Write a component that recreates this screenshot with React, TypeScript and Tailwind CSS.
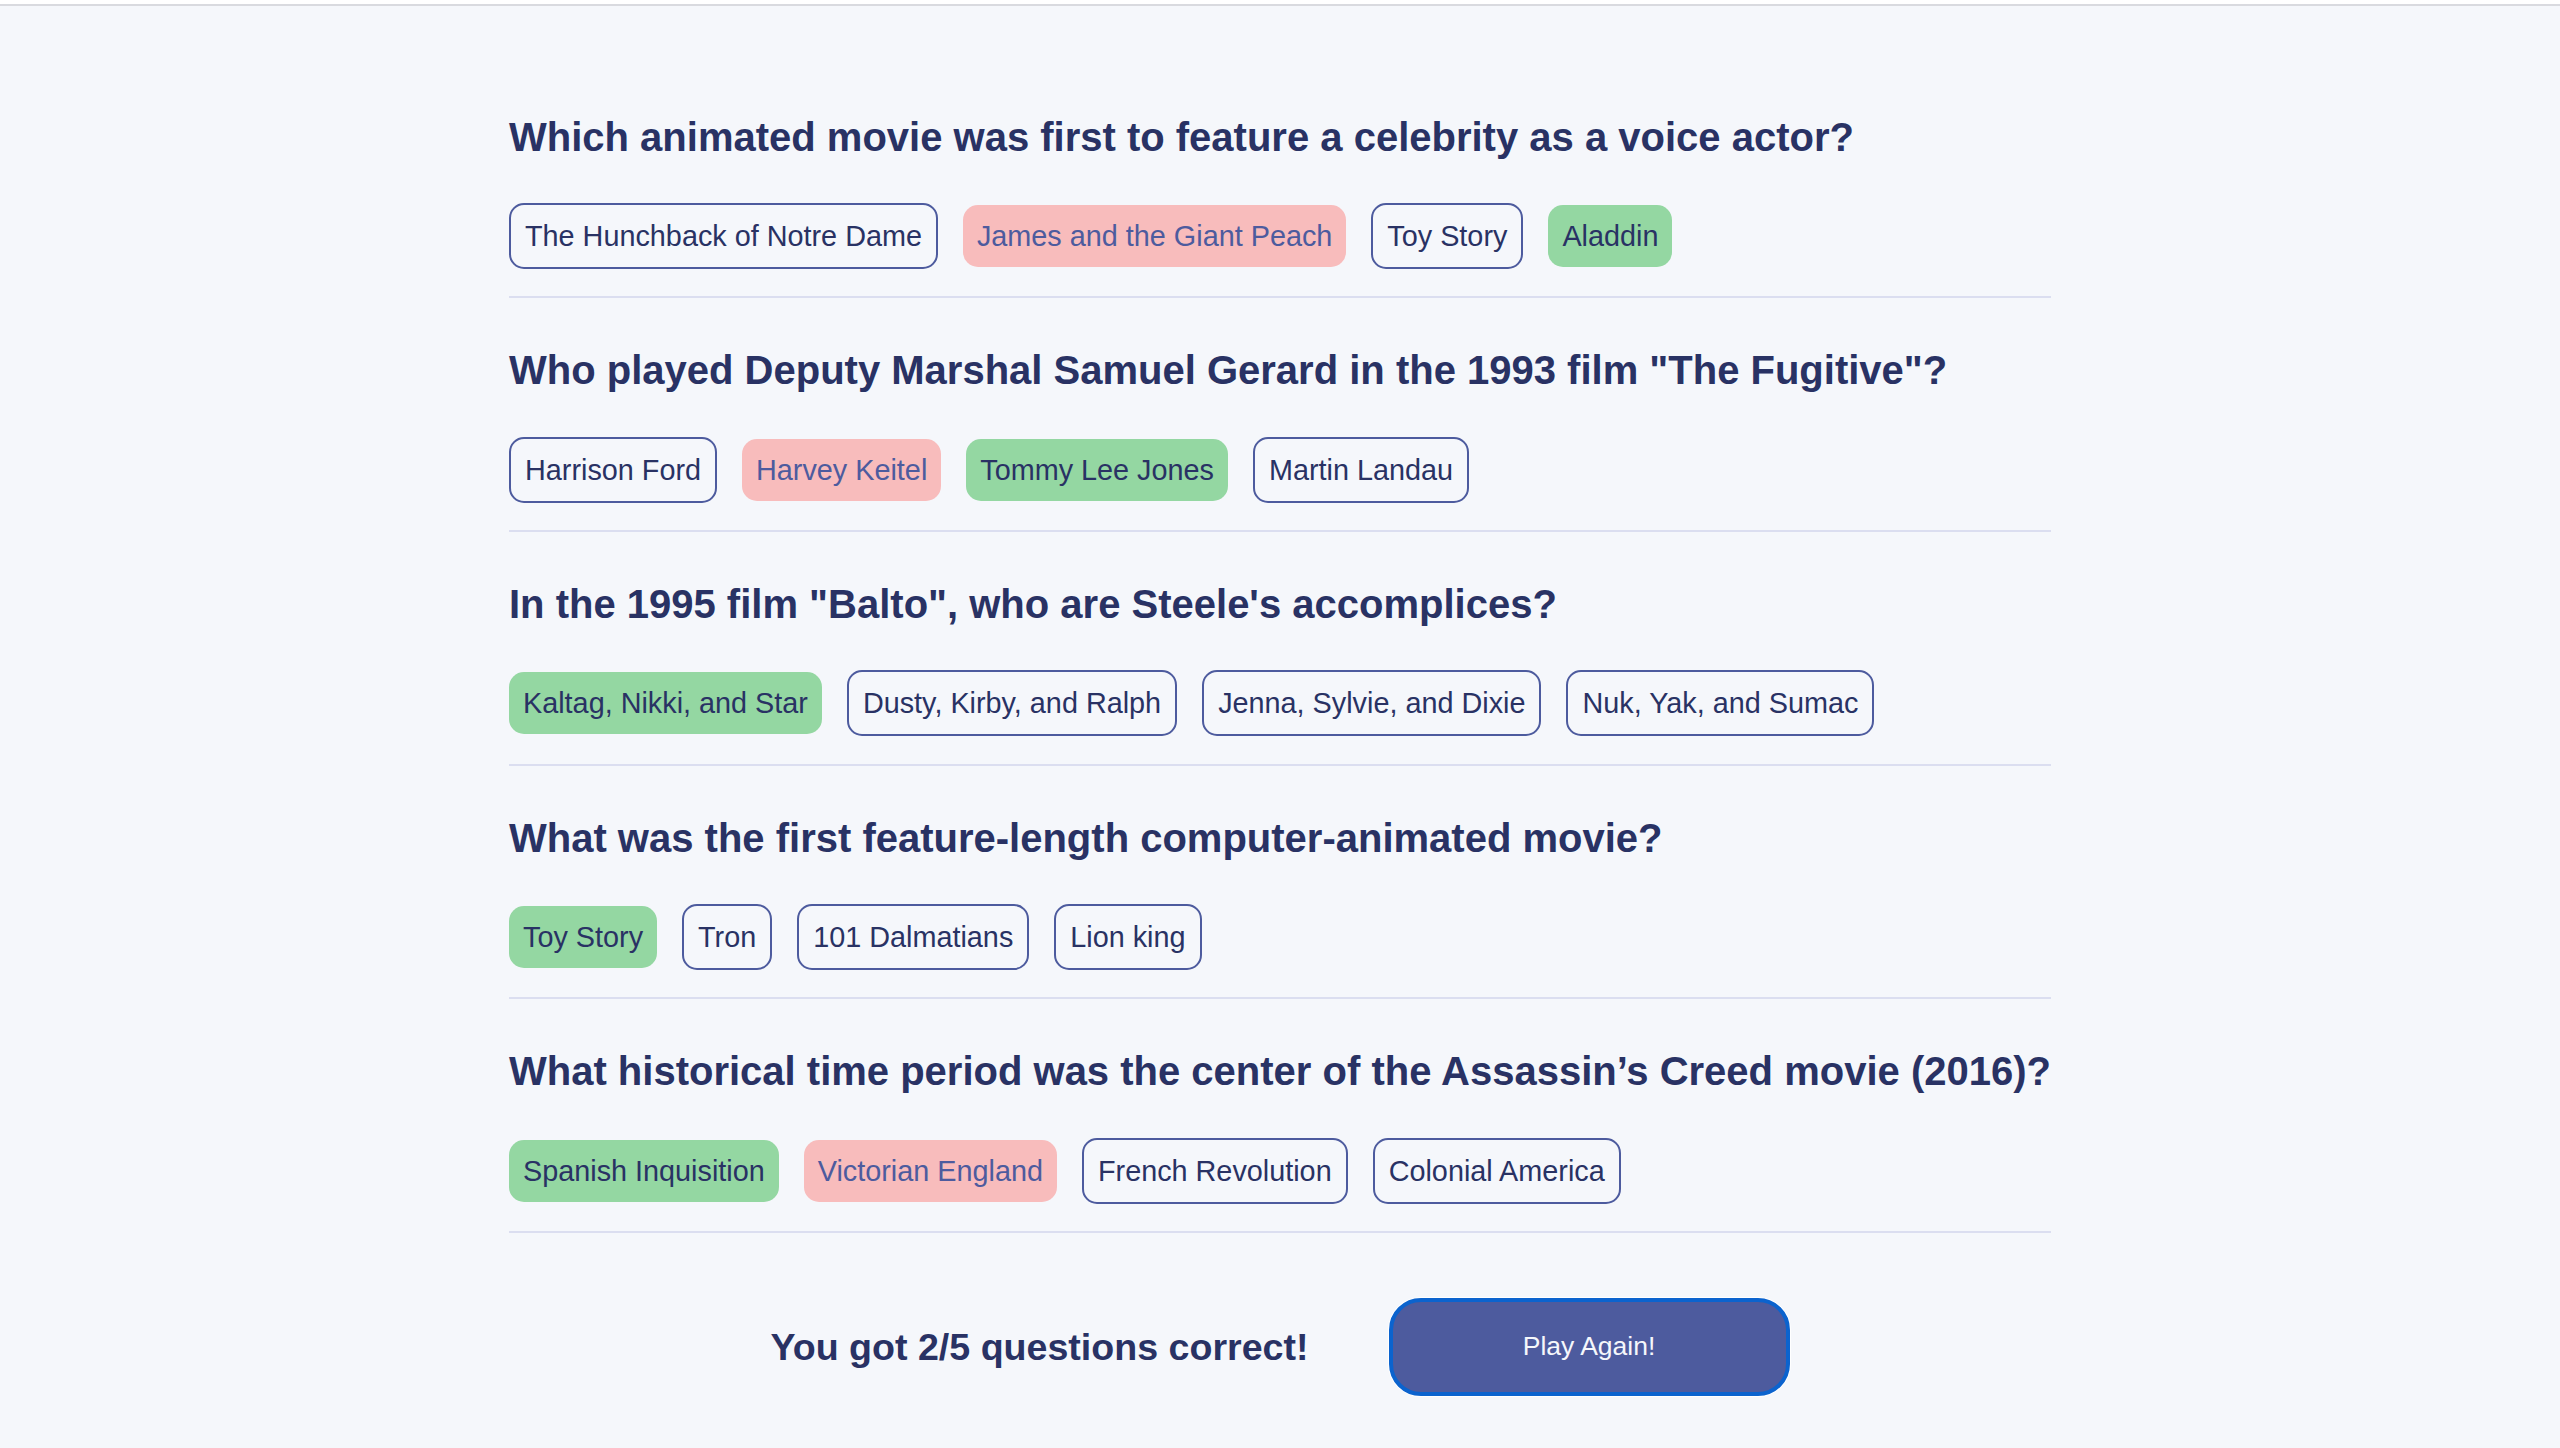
type Answer = {
  text: string;
  state: "none" | "correct" | "wrong";
};

type Question = {
  id: number;
  question: string;
  answers: Answer[];
};

const questions: Question[] = [
  {
    id: 1,
    question: "Which animated movie was first to feature a celebrity as a voice actor?",
    answers: [
      { text: "The Hunchback of Notre Dame", state: "none" },
      { text: "James and the Giant Peach", state: "wrong" },
      { text: "Toy Story", state: "none" },
      { text: "Aladdin", state: "correct" },
    ],
  },
  {
    id: 2,
    question: 'Who played Deputy Marshal Samuel Gerard in the 1993 film "The Fugitive"?',
    answers: [
      { text: "Harrison Ford", state: "none" },
      { text: "Harvey Keitel", state: "wrong" },
      { text: "Tommy Lee Jones", state: "correct" },
      { text: "Martin Landau", state: "none" },
    ],
  },
  {
    id: 3,
    question: 'In the 1995 film "Balto", who are Steele\'s accomplices?',
    answers: [
      { text: "Kaltag, Nikki, and Star", state: "correct" },
      { text: "Dusty, Kirby, and Ralph", state: "none" },
      { text: "Jenna, Sylvie, and Dixie", state: "none" },
      { text: "Nuk, Yak, and Sumac", state: "none" },
    ],
  },
  {
    id: 4,
    question: "What was the first feature-length computer-animated movie?",
    answers: [
      { text: "Toy Story", state: "correct" },
      { text: "Tron", state: "none" },
      { text: "101 Dalmatians", state: "none" },
      { text: "Lion king", state: "none" },
    ],
  },
  {
    id: 5,
    question: "What historical time period was the center of the Assassin’s Creed movie (2016)?",
    answers: [
      { text: "Spanish Inquisition", state: "correct" },
      { text: "Victorian England", state: "wrong" },
      { text: "French Revolution", state: "none" },
      { text: "Colonial America", state: "none" },
    ],
  },
];

function chipClass(state: Answer["state"]) {
  if (state === "correct") return "bg-[#94d7a2] text-[#293264]";
  if (state === "wrong") return "bg-[#f8bcbc] text-[#4d5b9e]";
  return "border-2 border-[#4d5b9e] text-[#293264]";
}

export default function App() {
  return (
    <div className="min-h-screen bg-[#f5f7fb] font-['Liberation_Sans',Arial,sans-serif]">
      <div className="h-[6px] bg-white border-b-2 border-[#d9dadf]" />

      <main className="w-[1542px] mx-auto pt-[58.5px] pb-[50px]">
        {questions.map((q) => (
          <section
            key={q.id}
            className="pt-[48px] pb-[27.2px] border-b-2 border-[#dbdef0]"
          >
            <h2 className="text-[40px] leading-[48px] font-bold text-[#293264] whitespace-nowrap">
              {q.question}
            </h2>
            <div className="mt-[42.5px] flex items-center gap-[25px]">
              {q.answers.map((a) => (
                <span
                  key={a.text}
                  className={`px-[14px] py-[14px] rounded-[15px] text-[28.8px] leading-[34px] whitespace-nowrap ${chipClass(a.state)}`}
                >
                  {a.text}
                </span>
              ))}
            </div>
          </section>
        ))}

        <div className="mt-[65px] flex items-center justify-center gap-[80px]">
          <p className="text-[37.6px] font-bold text-[#293264]">
            You got 2/5 questions correct!
          </p>
          <button className="w-[401px] h-[98px] rounded-[32px] bg-[#4d5b9e] border-4 border-[#0b63ce] ring-1 ring-white text-[26.5px] text-[#f5f7fb]">
            Play Again!
          </button>
        </div>
      </main>
    </div>
  );
}
